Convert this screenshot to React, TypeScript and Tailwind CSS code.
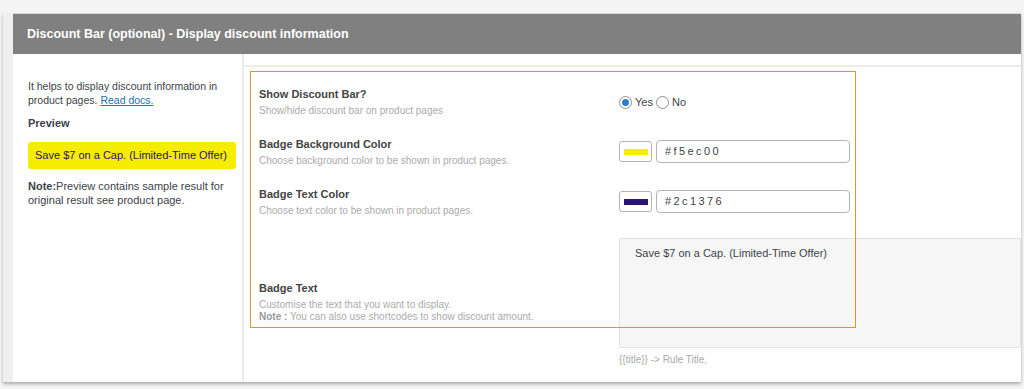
import React from 'react';

const font = { fontFamily: '"Liberation Sans", Arial, sans-serif' };

const Radio: React.FC<{ checked?: boolean; label: string }> = ({ checked, label }) => (
  <label className="flex items-center gap-[3px]">
    <span className="w-[13px] h-[13px] rounded-full border border-[#8c8f94] bg-white flex items-center justify-center">
      {checked && <span className="w-[7px] h-[7px] rounded-full bg-[#2a7fd1]" />}
    </span>
    <span className="text-[11px] text-[#3c434a]">{label}</span>
  </label>
);

const ColorField: React.FC<{ color: string }> = ({ color }) => (
  <div className="flex items-center gap-[4px]">
    <div className="w-[33px] h-[21px] border border-[#b4b4b4] rounded-[3px] bg-white flex items-center justify-center">
      <div className="w-[24px] h-[6px]" style={{ backgroundColor: color }} />
    </div>
    <div className="w-[194px] h-[23px] border border-[#b4b4b4] rounded-[4px] bg-white flex items-center px-[8px]">
      <span className="text-[11px] tracking-[2.4px] text-[#3c434a]">{color}</span>
    </div>
  </div>
);

const Label: React.FC<{ title: string; children: React.ReactNode }> = ({ title, children }) => (
  <div className="w-[360px] shrink-0">
    <div className="text-[11px] leading-[16px] font-bold text-[#444]">{title}</div>
    <div className="text-[10px] leading-[12px] mt-[3px] text-[#ababab]">{children}</div>
  </div>
);

export default function App() {
  return (
    <div className="w-[1024px] h-[389px] bg-[#f4f4f4] pt-[13px] pl-[3px] overflow-hidden" style={font}>
      <div className="w-[1018px] h-[369px] bg-white flex shadow-[0_2px_3px_rgba(0,0,0,0.3)]">
        <div className="w-[10px] shrink-0 bg-[#efefef]" />
        <div className="flex-1 flex flex-col min-w-0">
          {/* header */}
          <div className="h-[41px] bg-[#808080] flex items-center px-[14px] border-t border-[#d9d9d9]">
            <h2 className="text-[12.5px] font-bold text-white">Discount Bar (optional) - Display discount information</h2>
          </div>

          <div className="flex flex-1">
            {/* left column */}
            <div className="w-[231px] shrink-0 border-r-2 border-[#ececec] pt-[25px] pl-[15px] pr-[6px]">
              <p className="text-[10.5px] leading-[14px] text-[#3c434a]">
                It helps to display discount information in product pages.{' '}
                <a className="text-[#2271b1] underline">Read docs.</a>
              </p>
              <div className="mt-[9px] text-[11px] leading-[14px] font-bold text-[#3c434a]">Preview</div>
              <div className="mt-[12px] h-[27px] rounded-[3px] bg-[#f5ec00] flex items-center px-[7px]">
                <span className="text-[11px] text-[#2c1376]">Save $7 on a Cap. (Limited-Time Offer)</span>
              </div>
              <p className="mt-[10px] text-[11px] leading-[14px] text-[#3c434a]">
                <b>Note:</b>Preview contains sample result for original result see product page.
              </p>
            </div>

            {/* right panel */}
            <div className="flex-1 mt-[11px] border-t-2 border-[#ececec] relative pl-[15px]">
              <div className="flex pt-[19px] h-[69px]">
                <Label title="Show Discount Bar?">Show/hide discount bar on product pages</Label>
                <div className="flex items-center gap-[3px] mt-[9px] h-[15px]">
                  <Radio checked label="Yes" />
                  <Radio label="No" />
                </div>
              </div>

              <div className="flex h-[50px]">
                <Label title="Badge Background Color">Choose background color to be shown in product pages.</Label>
                <div className="mt-[4px]">
                  <ColorField color="#f5ec00" />
                </div>
              </div>

              <div className="flex h-[52px]">
                <Label title="Badge Text Color">Choose text color to be shown in product pages.</Label>
                <div className="mt-[4px]">
                  <ColorField color="#2c1376" />
                </div>
              </div>

              <div className="flex">
                <div className="w-[360px] shrink-0 mt-[42px]">
                  <div className="text-[11px] leading-[16px] font-bold text-[#444]">Badge Text</div>
                  <div className="text-[10px] leading-[12px] mt-[3px] text-[#ababab]">
                    Customise the text that you want to display.
                    <br />
                    <b className="text-[#999]">Note :</b> You can also use shortcodes to show discount amount.
                  </div>
                </div>
                <div className="flex-1">
                  <div className="h-[110px] bg-[#f6f6f6] border border-[#e2e2e2] rounded-[2px] pt-[7px] pl-[15px]">
                    <span className="block text-[11px] leading-[14px] text-[#3c434a]">Save $7 on a Cap. (Limited-Time Offer)</span>
                  </div>
                  <div className="mt-[4px] text-[10px] text-[#a9a9a9]">{'{{title}} -> Rule Title,'}</div>
                </div>
              </div>

              {/* highlight overlay */}
              <div className="absolute left-[6px] top-[4px] w-[606px] h-[257px] border border-solid border-[#d9962f] pointer-events-none" />
            </div>
          </div>
        </div>
      </div>
    </div>
  );
}
